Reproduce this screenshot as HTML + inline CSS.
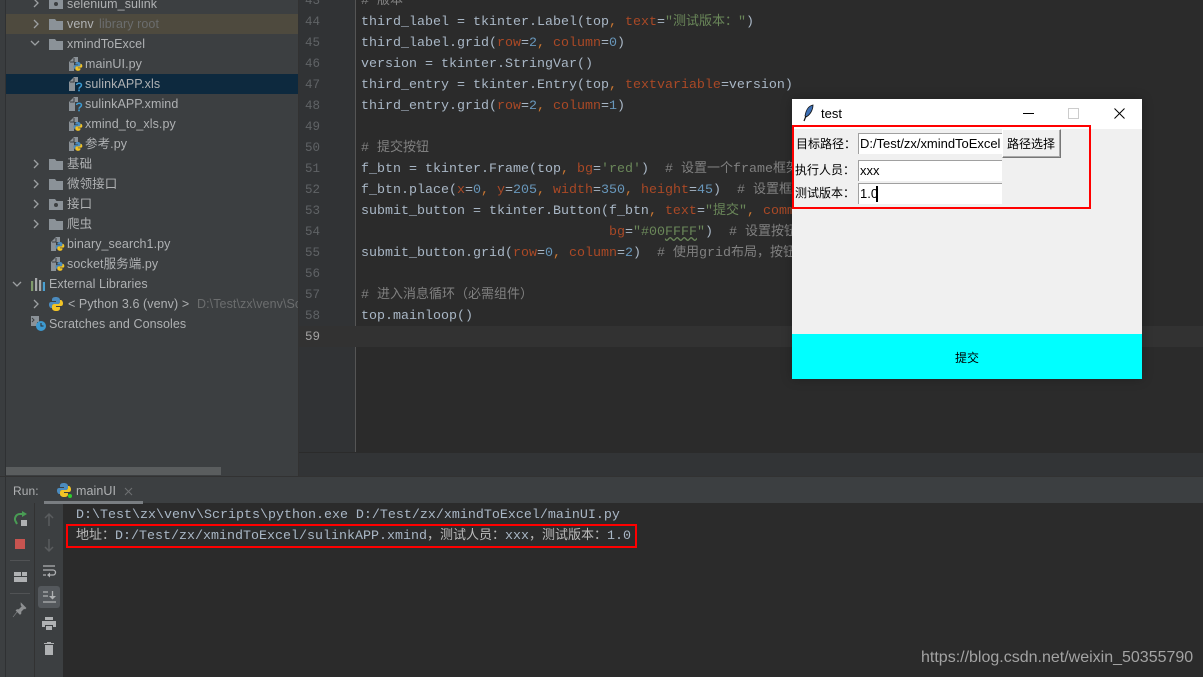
<!DOCTYPE html>
<html><head><meta charset="utf-8">
<style>
html,body{margin:0;padding:0;background:#2b2b2b}
#r{position:relative;width:1203px;height:677px;overflow:hidden;background:#2b2b2b}
.a{position:absolute}
.t{position:absolute;white-space:pre;font:12.5px/20px "Liberation Sans","Noto Sans CJK SC",sans-serif;letter-spacing:.08px;color:#afb1b3}
.c{position:absolute;left:361px;white-space:pre;font:13.33px/21px "Liberation Mono","Noto Sans CJK SC",monospace;color:#a9b7c6}
.z{font-size:13px;line-height:0}
.n{position:absolute;left:305px;width:30px;white-space:pre;font:12.5px/21px "Liberation Mono",monospace;color:#606366}
.k{color:#aa4926}.s{color:#6a8759}.m{color:#6897bb}.h{color:#808080}.o{color:#cc7832}
.w{font:12px/18px "Liberation Sans","Noto Sans CJK SC",sans-serif;color:#000;position:absolute;white-space:pre}
.e{position:absolute;left:858px;width:144px;background:#fff;box-sizing:border-box;border-top:1px solid #a0a0a0;border-left:1px solid #a0a0a0}
svg{position:absolute;overflow:visible}
</style></head><body><div id="r">
<svg width="0" height="0" style="left:0;top:0"><defs>
<g id="f"><path d="M0 2h6l1.500 2h6.500v9H0z" fill="#8b9298"/></g>
<g id="ar"><path d="M1 0l4 4-4 4" fill="none" stroke="#9da0a2" stroke-width="1.300"/></g>
<g id="ad"><path d="M0 1l4 4 4-4" fill="none" stroke="#9da0a2" stroke-width="1.300"/></g>
<g id="bp"><path d="M7 0c-3 0-4 1-4 3v1h4v1H2C0 5 0 7 0 8s1 3 2 3h1V9c0-1 1-2 2-2h4c1 0 2-1 2-2V3c0-2-2-3-4-3z" fill="#4b8bbe"/><path d="M7 14c3 0 4-1 4-3v-1H7V9h5c2 0 2-2 2-3s-1-3-2-3h-1v2c0 1-1 2-2 2H5c-1 0-2 1-2 2v2c0 2 2 3 4 3z" fill="#f2c426"/></g>
<g id="py"><path d="M0 5l5-5h4v5H5v9H0z" fill="#8b9298"/><path d="M1 5h4V1" fill="none" stroke="#3c3f41"/><use href="#bp" transform="translate(4.500 5) scale(.63)"/></g>
<g id="q"><path d="M0 5l5-5h4v5H6v9H0z" fill="#8b9298"/><path d="M1 5h4V1" fill="none" stroke="#3c3f41"/><path d="M7.500 8c.5-2.300 5-2.300 5 0 0 2-2.500 2-2.500 3.800" fill="none" stroke="#3d9ad1" stroke-width="1.500"/><rect x="9.200" y="12.500" width="1.600" height="1.800" fill="#3d9ad1"/></g>
</defs></svg>

<!-- sidebar -->
<div class="a" style="left:0;top:0;width:299px;height:476px;background:#3c3f41"></div>
<div class="a" style="left:0;top:0;width:5px;height:476px;background:#3a3d3f"></div>
<div class="a" style="left:5px;top:0;width:1px;height:476px;background:#2f3133"></div>
<div class="a" style="left:6px;top:14px;width:292px;height:20px;background:#4e4a3e"></div>
<div class="a" style="left:6px;top:74px;width:292px;height:20px;background:#0d293e"></div>
<div class="a" style="left:298px;top:0;width:1px;height:476px;background:#323232"></div>
<div class="a" style="left:6px;top:467px;width:215px;height:8px;background:#5a5d5e"></div>

<svg style="left:33px;top:0" width="10" height="10"><use href="#ar" y="-1"/></svg>
<svg style="left:33px;top:20px" width="10" height="10"><use href="#ar"/></svg>
<svg style="left:31px;top:40px" width="10" height="10"><use href="#ad"/></svg>
<svg style="left:33px;top:160px" width="10" height="10"><use href="#ar"/></svg>
<svg style="left:33px;top:180px" width="10" height="10"><use href="#ar"/></svg>
<svg style="left:33px;top:200px" width="10" height="10"><use href="#ar"/></svg>
<svg style="left:33px;top:220px" width="10" height="10"><use href="#ar"/></svg>
<svg style="left:13px;top:281px" width="10" height="10"><use href="#ad"/></svg>
<svg style="left:33px;top:300px" width="10" height="10"><use href="#ar"/></svg>

<svg style="left:49px;top:-4px" width="14" height="14"><use href="#f"/><circle cx="7" cy="8" r="2" fill="#3c3f41"/></svg>
<svg style="left:49px;top:17px" width="14" height="14"><use href="#f"/></svg>
<svg style="left:49px;top:37px" width="14" height="14"><use href="#f"/></svg>
<svg style="left:49px;top:157px" width="14" height="14"><use href="#f"/></svg>
<svg style="left:49px;top:177px" width="14" height="14"><use href="#f"/></svg>
<svg style="left:49px;top:197px" width="14" height="14"><use href="#f"/><circle cx="7" cy="8" r="2" fill="#3c3f41"/></svg>
<svg style="left:49px;top:217px" width="14" height="14"><use href="#f"/></svg>

<svg style="left:69px;top:57px" width="14" height="14"><use href="#py"/></svg>
<svg style="left:69px;top:77px" width="14" height="14"><use href="#q"/></svg>
<svg style="left:69px;top:97px" width="14" height="14"><use href="#q"/></svg>
<svg style="left:69px;top:117px" width="14" height="14"><use href="#py"/></svg>
<svg style="left:69px;top:137px" width="14" height="14"><use href="#py"/></svg>
<svg style="left:51px;top:237px" width="14" height="14"><use href="#py"/></svg>
<svg style="left:51px;top:257px" width="14" height="14"><use href="#py"/></svg>
<svg style="left:49px;top:297px" width="14" height="14"><use href="#bp"/></svg>
<svg style="left:31px;top:278px" width="14" height="13"><rect x="0" y="3" width="2.200" height="10" fill="#7f9a6b"/><rect x="4" y="0" width="2.200" height="13" fill="#a6a8aa"/><rect x="8" y="2" width="2.200" height="11" fill="#a6a8aa"/><rect x="11.800" y="4" width="2.200" height="9" fill="#4a9fd0"/></svg>
<svg style="left:31px;top:316px" width="15" height="15"><path d="M0 0h8v6H6v4H0z" fill="#8b9298"/><path d="M1 2l2 2-2 2" fill="none" stroke="#3c3f41"/><circle cx="10" cy="10" r="5" fill="#3d9ad1"/><path d="M10 7v3h2.500" fill="none" stroke="#2b2b2b"/></svg>

<div class="t" style="left:67px;top:-6px">selenium_sulink</div>
<div class="t" style="left:67px;top:14px">venv</div>
<div class="t" style="left:99px;top:14px;color:#6b6d6e">library root</div>
<div class="t" style="left:67px;top:34px">xmindToExcel</div>
<div class="t" style="left:85px;top:54px">mainUI.py</div>
<div class="t" style="left:85px;top:74px">sulinkAPP.xls</div>
<div class="t" style="left:85px;top:94px">sulinkAPP.xmind</div>
<div class="t" style="left:85px;top:114px">xmind_to_xls.py</div>
<div class="t" style="left:85px;top:134px">参考.py</div>
<div class="t" style="left:67px;top:154px">基础</div>
<div class="t" style="left:67px;top:174px">微领接口</div>
<div class="t" style="left:67px;top:194px">接口</div>
<div class="t" style="left:67px;top:214px">爬虫</div>
<div class="t" style="left:67px;top:234px">binary_search1.py</div>
<div class="t" style="left:67px;top:254px">socket服务端.py</div>
<div class="t" style="left:49px;top:274px">External Libraries</div>
<div class="t" style="left:68px;top:294px">&lt; Python 3.6 (venv) &gt;</div>
<div class="t" style="left:197px;top:294px;color:#6b6d6e;width:101px;overflow:hidden">D:\Test\zx\venv\Scripts</div>
<div class="t" style="left:49px;top:314px">Scratches and Consoles</div>

<!-- editor -->
<div class="a" style="left:299px;top:0;width:56px;height:452px;background:#313335"></div>
<div class="a" style="left:355px;top:0;width:1px;height:452px;background:#555"></div>
<div class="a" style="left:299px;top:326px;width:904px;height:21px;background:#323232"></div>
<div class="a" style="left:299px;top:452px;width:904px;height:24px;background:#323436"></div>
<div class="a" style="left:299px;top:452px;width:904px;height:1px;background:#2b2b2b"></div>

<div class="n" style="top:-9px">43</div>
<div class="n" style="top:12px">44</div>
<div class="n" style="top:33px">45</div>
<div class="n" style="top:54px">46</div>
<div class="n" style="top:75px">47</div>
<div class="n" style="top:96px">48</div>
<div class="n" style="top:117px">49</div>
<div class="n" style="top:138px">50</div>
<div class="n" style="top:159px">51</div>
<div class="n" style="top:180px">52</div>
<div class="n" style="top:201px">53</div>
<div class="n" style="top:222px">54</div>
<div class="n" style="top:243px">55</div>
<div class="n" style="top:264px">56</div>
<div class="n" style="top:285px">57</div>
<div class="n" style="top:306px">58</div>
<div class="n" style="top:327px;color:#a4a3a3">59</div>

<div class="c h" style="top:-9px"># <span class="z">版本</span></div>
<div class="c" style="top:12px">third_label = tkinter.Label(top<span class="o">,</span> <span class="k">text</span>=<span class="s">"<span class="z">测试版本：</span>"</span>)</div>
<div class="c" style="top:33px">third_label.grid(<span class="k">row</span>=<span class="m">2</span><span class="o">,</span> <span class="k">column</span>=<span class="m">0</span>)</div>
<div class="c" style="top:54px">version = tkinter.StringVar()</div>
<div class="c" style="top:75px">third_entry = tkinter.Entry(top<span class="o">,</span> <span class="k">textvariable</span>=version)</div>
<div class="c" style="top:96px">third_entry.grid(<span class="k">row</span>=<span class="m">2</span><span class="o">,</span> <span class="k">column</span>=<span class="m">1</span>)</div>
<div class="c h" style="top:138px"># <span class="z">提交按钮</span></div>
<div class="c" style="top:159px">f_btn = tkinter.Frame(top<span class="o">,</span> <span class="k">bg</span>=<span class="s">'red'</span>)  <span class="h"># <span class="z">设置一个</span>frame<span class="z">框架</span></span></div>
<div class="c" style="top:180px">f_btn.place(<span class="k">x</span>=<span class="m">0</span><span class="o">,</span> <span class="k">y</span>=<span class="m">205</span><span class="o">,</span> <span class="k">width</span>=<span class="m">350</span><span class="o">,</span> <span class="k">height</span>=<span class="m">45</span>)  <span class="h"># <span class="z">设置框架</span></span></div>
<div class="c" style="top:201px">submit_button = tkinter.Button(f_btn<span class="o">,</span> <span class="k">text</span>=<span class="s">"<span class="z">提交</span>"</span><span class="o">,</span> <span class="k">command</span></div>
<div class="c" style="top:222px">                               <span class="k">bg</span>=<span class="s">"#00<span style="text-decoration:underline wavy #6a8759">FFFF</span>"</span>)  <span class="h"># <span class="z">设置按钮</span></span></div>
<div class="c" style="top:243px">submit_button.grid(<span class="k">row</span>=<span class="m">0</span><span class="o">,</span> <span class="k">column</span>=<span class="m">2</span>)  <span class="h"># <span class="z">使用</span>grid<span class="z">布局，按钮</span></span></div>
<div class="c h" style="top:285px"># <span class="z">进入消息循环（必需组件）</span></div>
<div class="c" style="top:306px">top.mainloop()</div>

<!-- tk window -->
<div class="a" style="left:792px;top:99px;width:350px;height:280px;background:#f0f0f0;box-shadow:0 0 10px rgba(0,0,0,.25)"></div>
<div class="a" style="left:792px;top:99px;width:350px;height:30px;background:#fff"></div>
<div class="a" style="left:792px;top:334px;width:350px;height:45px;background:#0ff"></div>
<svg style="left:803px;top:105px" width="12" height="16"><path d="M10 0C5 1 3 5 2 11l1 1c4-2 7-7 7-12z" fill="#3d6fb4" stroke="#111" stroke-width=".8"/><path d="M3 11L1 16" stroke="#111" stroke-width="1.200"/></svg>
<div class="w" style="left:821px;top:105px;font-size:13px">test</div>
<div class="a" style="left:1023px;top:113px;width:11px;height:1px;background:#000"></div>
<div class="a" style="left:1068px;top:108px;width:9px;height:9px;border:1px solid #ccc"></div>
<svg style="left:1114px;top:108px" width="11" height="11"><path d="M.5.500l10 10M10.500.500l-10 10" stroke="#000" fill="none"/></svg>

<div class="w" style="left:796px;top:135px">目标路径：</div>
<div class="w" style="left:795px;top:161px">执行人员：</div>
<div class="w" style="left:795px;top:184px">测试版本：</div>
<div class="e" style="top:133px;height:21px"></div>
<div class="e" style="top:160px;height:21px"></div>
<div class="e" style="top:183px;height:21px"></div>
<div class="w" style="left:860px;top:135px;width:142px;overflow:hidden;font-size:13px;letter-spacing:-.02px">D:/Test/zx/xmindToExcel</div>
<div class="w" style="left:860px;top:162px;font-size:13px">xxx</div>
<div class="w" style="left:860px;top:185px;font-size:13px">1.0</div>
<div class="a" style="left:876px;top:186px;width:2px;height:16px;background:#000"></div>
<div class="a" style="left:1002px;top:129px;width:59px;height:29px;box-sizing:border-box;background:#f0f0f0;border:1px solid;border-color:#fff #777 #777 #fff;box-shadow:inset -1px -1px 0 #aaa"></div>
<div class="w" style="left:1007px;top:135px">路径选择</div>
<div class="w" style="left:955px;top:349px">提交</div>
<div class="a" style="left:792px;top:125px;width:299px;height:84px;box-sizing:border-box;border:2px solid #f00"></div>

<!-- run panel -->
<div class="a" style="left:0;top:476px;width:1203px;height:27px;background:#3c3f41"></div>
<div class="a" style="left:0;top:476px;width:1203px;height:1px;background:#323232"></div>
<div class="a" style="left:0;top:503px;width:6px;height:174px;background:#3c3f41"></div>
<div class="a" style="left:6px;top:503px;width:57px;height:174px;background:#3c3f41"></div>
<div class="a" style="left:5px;top:477px;width:1px;height:200px;background:#2f3133"></div>
<div class="a" style="left:34px;top:503px;width:1px;height:174px;background:#323232"></div>
<div class="a" style="left:44px;top:501px;width:99px;height:3px;background:#7a7e82"></div>
<div class="t" style="left:13px;top:481px;font-size:12px">Run:</div>
<svg style="left:57px;top:483px" width="16" height="16"><use href="#bp"/><circle cx="13" cy="13" r="2" fill="#2ecc2e"/></svg>
<div class="t" style="left:76px;top:481px">mainUI</div>
<svg style="left:125px;top:488px" width="8" height="8"><path d="M0 0l7 7M7 0L0 7" stroke="#6e7072" fill="none"/></svg>

<svg style="left:13px;top:511px" width="16" height="16"><path d="M11 3H7a5 5 0 0 0-4 8l1 2" fill="none" stroke="#499c54" stroke-width="2"/><path d="M9 0l5 3-5 3z" fill="#499c54"/><rect x="8" y="9" width="6" height="6" fill="#afb1b3"/></svg>
<div class="a" style="left:15px;top:539px;width:10px;height:10px;background:#c75450"></div>
<div class="a" style="left:10px;top:560px;width:20px;height:1px;background:#515355"></div>
<svg style="left:14px;top:572px" width="13" height="11"><path d="M0 0h7v4H0zM8 0h5v4H8zM0 5h13v5H0z" fill="#afb1b3"/></svg>
<div class="a" style="left:10px;top:593px;width:20px;height:1px;background:#515355"></div>
<svg style="left:13px;top:603px" width="14" height="14"><path d="M8 0l5 5-1 1-1-.500-3 3 0 2-1 1-4-4 1-1 2 0 3-3L8 2zM4 9l-4 5" fill="#8e9092" stroke="#8e9092" stroke-width=".6"/></svg>

<svg style="left:44px;top:513px" width="10" height="13"><path d="M5 13V1M1 5l4-4 4 4" fill="none" stroke="#5a5d5f" stroke-width="1.500"/></svg>
<svg style="left:44px;top:539px" width="10" height="13"><path d="M5 0v12M1 8l4 4 4-4" fill="none" stroke="#5a5d5f" stroke-width="1.500"/></svg>
<svg style="left:43px;top:565px" width="13" height="13"><path d="M0 1h12M0 5h10a2.500 2.500 0 0 1 0 5H6M0 10h3" fill="none" stroke="#afb1b3" stroke-width="1.300"/><path d="M7 7.500l-3 2.500 3 2.500z" fill="#afb1b3"/></svg>
<div class="a" style="left:38px;top:586px;width:22px;height:22px;border-radius:3px;background:#54585c"></div>
<svg style="left:43px;top:591px" width="13" height="12"><path d="M0 1h5M0 5h5M0 11h13M9.500 0v6" fill="none" stroke="#afb1b3" stroke-width="1.300"/><path d="M6 5h7l-3.500 3.500z" fill="#afb1b3"/></svg>
<svg style="left:42px;top:617px" width="14" height="13"><path d="M3 0h8v3H3zM0 4h14v6h-3V8H3v2H0zM4 9h6v4H4z" fill="#afb1b3"/></svg>
<svg style="left:44px;top:642px" width="10" height="13"><path d="M3 0h4v1h3v1H0V1h3zM1 3h8v10H1z" fill="#afb1b3"/></svg>

<div class="c" style="left:76px;top:505px;line-height:21px">D:\Test\zx\venv\Scripts\python.exe D:/Test/zx/xmindToExcel/mainUI.py</div>
<div class="c" style="left:76px;top:526px;line-height:21px"><span class="z" style="color:#bbb">地址：</span>D:/Test/zx/xmindToExcel/sulinkAPP.xmind<span class="z" style="color:#bbb">，测试人员：</span>xxx<span class="z" style="color:#bbb">，测试版本：</span>1.0</div>
<div class="a" style="left:66px;top:524px;width:571px;height:24px;box-sizing:border-box;border:2px solid #f00"></div>

<div class="a" style="left:921px;top:648px;white-space:pre;font:16px/20px 'Liberation Sans',sans-serif;color:#a3a3a3">https://blog.csdn.net/weixin_50355790</div>
</div></body></html>
